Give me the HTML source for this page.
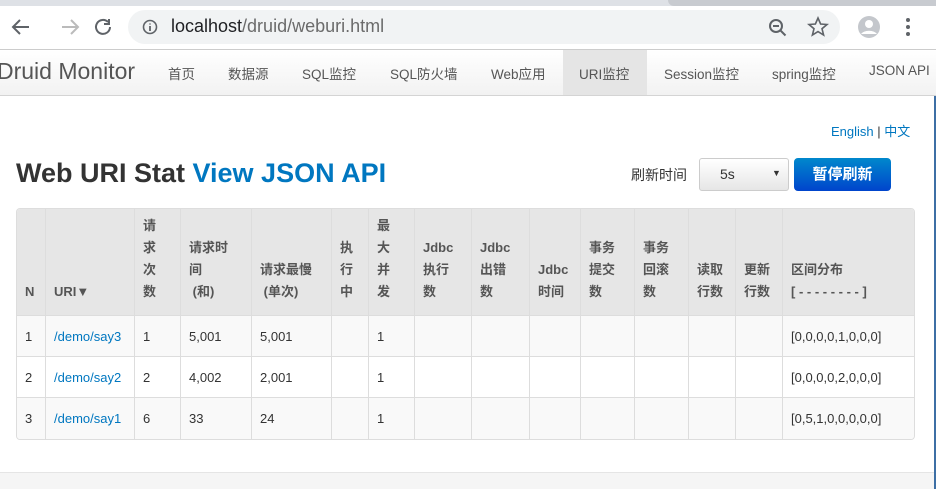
<!DOCTYPE html>
<html><head><meta charset="utf-8"><style>
*{margin:0;padding:0;box-sizing:border-box}
body{width:936px;height:489px;overflow:hidden;background:#fff;font-family:"Liberation Sans","Noto Sans CJK SC",sans-serif;position:relative;color:#333}
.a{position:absolute}
.chrome{left:0;top:0;width:936px;height:50px;background:#fff;border-bottom:1px solid #ccc}
.omni{left:128px;top:10px;width:712px;height:34px;border-radius:17px;background:#f1f3f4}
.nav{left:0;top:50px;width:936px;height:46px;background:linear-gradient(#fff,#f2f2f2);border-bottom:1px solid #d4d4d4}
.nav span{position:absolute;top:13px;font-size:13.5px;color:#555}
table{position:absolute;left:16px;top:208px;border-collapse:separate;border-spacing:0;font-size:13px;border:1px solid #ddd;border-radius:4px;overflow:hidden}
th,td{border-right:1px solid #ddd;border-bottom:1px solid #ddd;text-align:left;padding:0 8px}
tr:last-child td{border-bottom:none}
th:last-child,td:last-child{border-right:none}
th{background:#e6e6e6;vertical-align:bottom;padding-bottom:12px;line-height:22px;font-weight:bold;color:#555;height:107px}
td{height:41px;color:#333}
tr.o td{background:#f9f9f9}
a{color:#0077c0;text-decoration:none}
</style></head><body>
<div class="a" style="left:0;top:0;width:936px;height:6px;background:#dee1e6"></div>
<div class="a" style="left:668px;top:0;width:268px;height:6px;background:#c8cbd0;border-radius:0 0 0 6px"></div>
<div class="a chrome" style="top:6px;height:44px"></div>
<svg class="a" style="left:10px;top:16px" width="120" height="22"><g stroke="#5f6368" stroke-width="2" fill="none"><path d="M19 11H4M10 4l-7 7 7 7"/><path d="M52 11h15M61 4l7 7-7 7" stroke="#bbb"/><path d="M98 6a7 7 0 1 0 2 5" /><path d="M99 3v5h-5"/></g></svg>
<div class="a omni"></div>
<svg class="a" style="left:142px;top:19px" width="16" height="16"><circle cx="8" cy="8" r="6.5" stroke="#5f6368" stroke-width="1.6" fill="none"/><path d="M8 7v5M8 4.5v1" stroke="#5f6368" stroke-width="1.8"/></svg>
<div class="a" style="left:171px;top:16px;font-size:18px;color:#202124">localhost<span style="color:#6b6b6b">/druid/weburi.html</span></div>
<svg class="a" style="left:766px;top:16px" width="160" height="24"><g stroke="#5f6368" stroke-width="2" fill="none"><circle cx="10" cy="10" r="6"/><path d="M14.5 14.5l5 5M7 10h6"/><path d="M52 2l2.6 6 6.4.5-5 4.2 1.6 6.3-5.6-3.4-5.6 3.4 1.6-6.3-5-4.2 6.4-.5z" stroke-width="1.6"/></g><circle cx="103" cy="11" r="11" fill="#c4c7cc"/><circle cx="103" cy="8" r="4" fill="#fff"/><path d="M95 18a9 6 0 0 1 16 0" fill="#fff"/><g fill="#5f6368"><circle cx="142" cy="4" r="2"/><circle cx="142" cy="11" r="2"/><circle cx="142" cy="18" r="2"/></g></svg>
<div class="a nav">
<div class="a" style="left:563px;top:0;width:84px;height:45px;background:#e5e5e5"></div>
<div class="a" style="left:-3px;top:8px;font-size:23px;color:#555">Druid Monitor</div>
<span style="left:168px">首页</span><span style="left:228px">数据源</span><span style="left:302px">SQL监控</span><span style="left:390px">SQL防火墙</span><span style="left:491px">Web应用</span><span style="left:579px">URI监控</span><span style="left:664px">Session监控</span><span style="left:772px">spring监控</span><span style="left:869px">JSON API</span>
</div>
<div class="a" style="left:831px;top:121px;font-size:13px"><a>English</a> | <a>中文</a></div>
<div class="a" style="left:16px;top:158px;font-size:27px;font-weight:bold;color:#333">Web URI Stat <a>View JSON API</a></div>
<div class="a" style="left:631px;top:165px;font-size:14px;color:#333">刷新时间</div>
<div class="a" style="left:699px;top:158px;width:90px;height:33px;border:1px solid #ccc;border-radius:3px;background:linear-gradient(#fff,#e6e6e6);font-size:14px;padding:7px 0 0 20px">5s<span style="position:absolute;left:72px;top:9px;font-size:9px">▼</span></div>
<div class="a" style="left:794px;top:158px;width:97px;height:33px;border-radius:4px;background:linear-gradient(#0088cc,#0044cc);color:#fff;font-weight:bold;font-size:15px;text-align:center;line-height:33px">暂停刷新</div>
<table>
<tr><th style="width:29px">N</th><th style="width:89px">URI▼</th><th style="width:46px">请<br>求<br>次<br>数</th><th style="width:71px">请求时<br>间<br>&nbsp;(和)</th><th style="width:80px">请求最慢<br>&nbsp;(单次)</th><th style="width:37px">执<br>行<br>中</th><th style="width:46px">最<br>大<br>并<br>发</th><th style="width:57px">Jdbc<br>执行<br>数</th><th style="width:58px">Jdbc<br>出错<br>数</th><th style="width:51px">Jdbc<br>时间</th><th style="width:54px">事务<br>提交<br>数</th><th style="width:54px">事务<br>回滚<br>数</th><th style="width:47px">读取<br>行数</th><th style="width:47px">更新<br>行数</th><th style="width:131px">区间分布<br>[ - - - - - - - - ]</th></tr>
<tr class="o"><td>1</td><td><a>/demo/say3</a></td><td>1</td><td>5,001</td><td>5,001</td><td></td><td>1</td><td></td><td></td><td></td><td></td><td></td><td></td><td></td><td>[0,0,0,0,1,0,0,0]</td></tr>
<tr><td>2</td><td><a>/demo/say2</a></td><td>2</td><td>4,002</td><td>2,001</td><td></td><td>1</td><td></td><td></td><td></td><td></td><td></td><td></td><td></td><td>[0,0,0,0,2,0,0,0]</td></tr>
<tr class="o"><td>3</td><td><a>/demo/say1</a></td><td>6</td><td>33</td><td>24</td><td></td><td>1</td><td></td><td></td><td></td><td></td><td></td><td></td><td></td><td>[0,5,1,0,0,0,0,0]</td></tr>
</table>
<div class="a" style="left:0;top:472px;width:936px;height:17px;background:#f5f5f5;border-top:1px solid #e5e5e5"></div>
<div class="a" style="left:934px;top:96px;width:2px;height:393px;background:#3d6fa5"></div>
</body></html>
